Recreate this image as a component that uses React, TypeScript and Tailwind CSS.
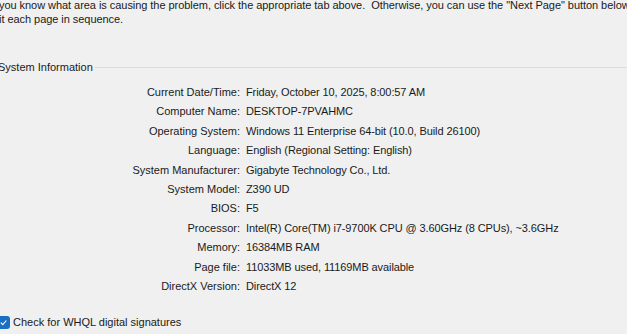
import React from "react";

const rows: [string, string][] = [
  ["Current Date/Time:", "Friday, October 10, 2025, 8:00:57 AM"],
  ["Computer Name:", "DESKTOP-7PVAHMC"],
  ["Operating System:", "Windows 11 Enterprise 64-bit (10.0, Build 26100)"],
  ["Language:", "English (Regional Setting: English)"],
  ["System Manufacturer:", "Gigabyte Technology Co., Ltd."],
  ["System Model:", "Z390 UD"],
  ["BIOS:", "F5"],
  ["Processor:", "Intel(R) Core(TM) i7-9700K CPU @ 3.60GHz (8 CPUs), ~3.6GHz"],
  ["Memory:", "16384MB RAM"],
  ["Page file:", "11033MB used, 11169MB available"],
  ["DirectX Version:", "DirectX 12"],
];

export default function App() {
  return (
    <div
      className="w-[627px] h-[334px] overflow-hidden bg-[#f0f0f0] text-[#1a1a1a] text-[11px] leading-[14px] relative"
      style={{ fontFamily: '"Liberation Sans", Arial, sans-serif' }}
    >
      <div className="whitespace-nowrap ml-[-1px] mt-[-2px] tracking-[-0.05px]">
        <div>you know what area is causing the problem, click the appropriate tab above.&nbsp; Otherwise, you can use the "Next Page" button below to visit each page in sequence.</div>
        <div>it each page in sequence.</div>
      </div>
      <div className="flex items-center mt-[34px] ml-[-2px]">
        <span className="whitespace-nowrap pr-[2px]">System Information</span>
        <div className="flex-1 h-px bg-[#dcdcdc]" />
      </div>
      <div className="grid grid-cols-[240px_1fr] gap-x-[6px] mt-[9px]">
        {rows.map(([k, v]) => (
          <React.Fragment key={k}>
            <div className="text-right h-[19.4px] leading-[19.4px] whitespace-nowrap">{k}</div>
            <div className="h-[19.4px] leading-[19.4px] whitespace-nowrap tracking-[-0.1px]">{v}</div>
          </React.Fragment>
        ))}
      </div>
      <div className="flex items-center mt-[19px] ml-[-3px] gap-[3px]">
        <div className="w-[13px] h-[13px] rounded-[3px] bg-[#1a6fc4] flex items-center justify-center">
          <svg width="9" height="9" viewBox="0 0 10 10">
            <path d="M2 5.2 L4.2 7.4 L8.2 2.8" stroke="white" strokeWidth="1.2" fill="none" />
          </svg>
        </div>
        <span className="whitespace-nowrap">Check for WHQL digital signatures</span>
      </div>
    </div>
  );
}
